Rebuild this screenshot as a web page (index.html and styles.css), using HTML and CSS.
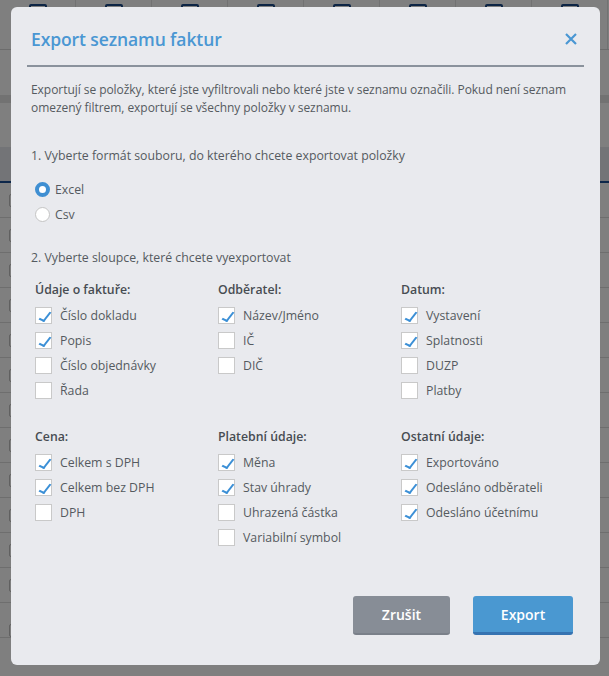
FILE: index.html
```html
<!DOCTYPE html>
<html lang="cs">
<head>
<meta charset="utf-8">
<title>Export seznamu faktur</title>
<link rel="stylesheet" href="styles.css">
</head>
<body>
<div class="page">
  <div class="toolbar">
    <div class="tool"><span class="tool-icon"></span></div>
    <div class="tool"><span class="tool-icon"></span></div>
    <div class="tool"><span class="tool-icon"></span></div>
    <div class="tool"><span class="tool-icon"></span></div>
    <div class="tool"><span class="tool-icon"></span></div>
    <div class="tool"><span class="tool-icon"></span></div>
    <div class="tool"><span class="tool-icon"></span></div>
    <div class="tool"><span class="tool-icon"></span></div>
  </div>
  <div class="filter-row"></div>
  <div class="band"></div>
  <div class="spacer"></div>
  <div class="table-head"></div>
  <div class="trow"><span class="tcheck"></span></div>
  <div class="trow"><span class="tcheck"></span></div>
  <div class="trow"><span class="tcheck"></span></div>
  <div class="trow"><span class="tcheck"></span></div>
  <div class="trow"><span class="tcheck"></span></div>
  <div class="trow"><span class="tcheck"></span></div>
  <div class="trow"><span class="tcheck"></span></div>
  <div class="trow"><span class="tcheck"></span></div>
  <div class="trow"><span class="tcheck"></span></div>
  <div class="trow"><span class="tcheck"></span></div>
  <div class="trow"><span class="tcheck"></span></div>
  <div class="trow"><span class="tcheck"></span></div>
  <div class="trow last"><span class="tcheck"></span><span class="tname">OBERUO 67_0.6</span><span class="tsum">0,00&nbsp; Kč</span></div>
</div>

<div class="overlay"></div>

<div class="modal" role="dialog" aria-labelledby="dlg-title">
  <div class="modal-header">
    <h1 id="dlg-title" class="modal-title">Export seznamu faktur</h1>
    <button class="close" aria-label="Zavřít">
      <svg width="12" height="12" viewBox="0 0 12 12"><path d="M1 1 L11 11 M11 1 L1 11" stroke="#4a97d3" stroke-width="2.2" stroke-linecap="butt"/></svg>
    </button>
  </div>
  <div class="modal-body">
    <p class="intro">Exportují se položky, které jste vyfiltrovali nebo které jste v seznamu označili. Pokud není seznam omezený filtrem, exportují se všechny položky v seznamu.</p>

    <p class="step step-1">1. Vyberte formát souboru, do kterého chcete exportovat položky</p>
    <div class="radios">
      <label class="opt"><span class="radio checked"></span>Excel</label>
      <label class="opt"><span class="radio"></span>Csv</label>
    </div>

    <p class="step step-2">2. Vyberte sloupce, které chcete vyexportovat</p>
    <div class="cols">
      <div class="col">
        <div class="col-title">Údaje o faktuře:</div>
        <label class="opt"><span class="cb on"></span>Číslo dokladu</label>
        <label class="opt"><span class="cb on"></span>Popis</label>
        <label class="opt"><span class="cb"></span>Číslo objednávky</label>
        <label class="opt"><span class="cb"></span>Řada</label>
      </div>
      <div class="col">
        <div class="col-title">Odběratel:</div>
        <label class="opt"><span class="cb on"></span>Název/Jméno</label>
        <label class="opt"><span class="cb"></span>IČ</label>
        <label class="opt"><span class="cb"></span>DIČ</label>
      </div>
      <div class="col">
        <div class="col-title">Datum:</div>
        <label class="opt"><span class="cb on"></span>Vystavení</label>
        <label class="opt"><span class="cb on"></span>Splatnosti</label>
        <label class="opt"><span class="cb"></span>DUZP</label>
        <label class="opt"><span class="cb"></span>Platby</label>
      </div>
      <div class="col">
        <div class="col-title">Cena:</div>
        <label class="opt"><span class="cb on"></span>Celkem s DPH</label>
        <label class="opt"><span class="cb on"></span>Celkem bez DPH</label>
        <label class="opt"><span class="cb"></span>DPH</label>
      </div>
      <div class="col">
        <div class="col-title">Platební údaje:</div>
        <label class="opt"><span class="cb on"></span>Měna</label>
        <label class="opt"><span class="cb on"></span>Stav úhrady</label>
        <label class="opt"><span class="cb"></span>Uhrazená částka</label>
        <label class="opt"><span class="cb"></span>Variabilní symbol</label>
      </div>
      <div class="col">
        <div class="col-title">Ostatní údaje:</div>
        <label class="opt"><span class="cb on"></span>Exportováno</label>
        <label class="opt"><span class="cb on"></span>Odesláno odběrateli</label>
        <label class="opt"><span class="cb on"></span>Odesláno účetnímu</label>
      </div>
    </div>
  </div>
  <div class="modal-footer">
    <button class="btn btn-cancel">Zrušit</button>
    <button class="btn btn-export">Export</button>
  </div>
</div>
</body>
</html>
```

FILE: styles.css
```css
* { box-sizing: border-box; }
html, body { margin: 0; padding: 0; }
body {
  width: 609px;
  height: 676px;
  overflow: hidden;
  position: relative;
  font-family: "Open Sans", "Noto Sans", sans-serif;
  background: #ffffff;
}

/* background page */
.page { width: 609px; }
.toolbar {
  display: flex;
  height: 50px;
  border-bottom: 1px solid #d8d8d8;
}
.tool {
  width: 76px;
  display: flex;
  justify-content: center;
  padding-top: 4px;
  border-right: 1px solid #e4e4e4;
}
.tool-icon {
  width: 18px; height: 16px;
  border: 2px solid #1b4a8a;
  border-radius: 2px;
}
.filter-row { height: 45px; }
.band { height: 8px; background: #e5e5e5; }
.spacer { height: 44px; }
.table-head {
  height: 36px;
  background: #e6e9ee;
  border-bottom: 2px solid #1a4f95;
}
.trow {
  height: 35px;
  border-bottom: 1px solid #dcdcdc;
  display: flex;
  align-items: center;
  padding-left: 9px;
}
.tcheck {
  width: 13px; height: 13px;
  border: 1px solid #c0c0c0;
  border-radius: 2px;
}
.trow.last { align-items: flex-end; }
.tname { font-size: 12px; color: #111; margin-left: 250px; line-height: 14px; margin-bottom: -4px; }
.tsum { font-size: 13px; color: #d00000; margin-left: 164px; line-height: 14px; margin-bottom: -4px; }

.overlay {
  position: absolute;
  inset: 0;
  background: rgba(0, 0, 0, 0.5);
}

/* modal */
.modal {
  position: absolute;
  left: 11px;
  top: 7px;
  width: 589px;
  height: 658px;
  background: #e9eaee;
  border-radius: 6px;
  display: flex;
  flex-direction: column;
}
.modal-header {
  margin: 0 16px;
  height: 60px;
  border-bottom: 2px solid #8a929c;
  display: flex;
  align-items: center;
  justify-content: space-between;
  padding: 6px 7px 0 4px;
}
.modal-title {
  margin: 0;
  font-size: 17.5px;
  font-weight: 600;
  color: #4a97d3;
  letter-spacing: -0.1px;
}
.close {
  border: 0;
  background: none;
  padding: 0;
  width: 12px; height: 12px;
  display: flex;
}
.modal-body {
  padding: 0 16px 0 20px;
  color: #555a60;
  font-size: 12.3px;
  flex: 1;
}
.intro {
  margin: 14px 0 0;
  line-height: 18px;
  font-size: 12px;
  letter-spacing: -0.05px;
}
.step { margin: 0; line-height: 18px; }
.step-1 { margin-top: 30px; }
.step-2 { margin-top: 22px; }
.radios {
  display: flex;
  flex-direction: column;
  padding-left: 4px;
  margin-top: 12px;
}
.opt {
  display: flex;
  align-items: center;
  height: 25px;
  gap: 8px;
  color: #555a60;
}
.radios .opt { gap: 5px; }
.radio {
  width: 15px; height: 15px;
  border-radius: 50%;
  background: #fff;
  border: 1px solid #c4c4c4;
}
.radio.checked {
  border: 4px solid #3f8fd2;
  background: #fff;
}
.cols {
  display: grid;
  grid-template-columns: 183px 183px 183px;
  row-gap: 24px;
  padding-left: 4px;
  margin-top: 13px;
}
.col { display: flex; flex-direction: column; }
.col-title {
  font-weight: 600;
  color: #474c52;
  height: 20px;
  line-height: 20px;
  margin-bottom: 3px;
}
.cb {
  width: 17px; height: 17px;
  background: #fff;
  border: 1px solid #c9c9c9;
  flex: none;
  position: relative;
}
.cb.on::after {
  content: "";
  position: absolute;
  left: 6px;
  top: 2px;
  width: 4px;
  height: 10px;
  border-right: 2px solid #3b8fd6;
  border-bottom: 2px solid #3b8fd6;
  transform: rotate(38deg) skewY(-12deg);
}
.modal-footer {
  display: flex;
  justify-content: flex-end;
  gap: 23px;
  padding: 0 27px 30px 0;
}
.btn {
  height: 39px;
  border: 0;
  border-radius: 3px;
  color: #fff;
  font-family: "Open Sans", sans-serif;
  font-size: 14px;
  font-weight: 600;
  cursor: pointer;
}
.btn-cancel {
  width: 97px;
  background: #878d96;
  border-bottom: 2px solid #7a8089;
}
.btn-export {
  width: 100px;
  background: #4a98d1;
  border-bottom: 3px solid #3673b1;
}
```
